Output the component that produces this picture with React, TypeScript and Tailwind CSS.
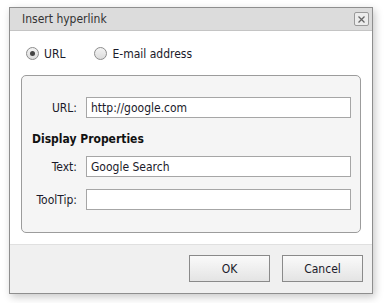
import React from "react";

const font = { fontFamily: '"DejaVu Sans Condensed", "DejaVu Sans", sans-serif' };

function Radio({ checked }: { checked?: boolean }) {
  return (
    <span className="w-[13px] h-[13px] rounded-full border border-[#8c8c8c] bg-gradient-to-b from-[#f4f4f4] to-[#dcdcdc] flex items-center justify-center">
      {checked && <span className="w-[5px] h-[5px] rounded-full bg-[#444]" />}
    </span>
  );
}

function Field({ label, value }: { label: string; value: string }) {
  return (
    <div className="flex items-center">
      <div className="w-[55px] text-right text-[12px] text-[#1a1a2a]">{label}</div>
      <div className="ml-[9px] w-[265px] h-[21px] border border-[#a6a6a6] bg-white flex items-center px-[4px] text-[12px] text-[#1a1a2a]">
        {value}
      </div>
    </div>
  );
}

function Button({ children }: { children: React.ReactNode }) {
  return (
    <div className="w-[81px] h-[27px] border border-[#8a8a8a] bg-gradient-to-b from-[#fafafa] to-[#e4e4e4] flex items-center justify-center text-[12px] text-[#1a1a2a]">
      {children}
    </div>
  );
}

export default function App() {
  return (
    <div className="w-[384px] h-[303px] bg-white pt-[7px] pl-[9px]" style={font}>
      <div className="w-[364px] h-[287px] border border-[#8e8e8e] bg-white flex flex-col shadow-[2px_3px_8px_rgba(0,0,0,0.22)]">
        <div className="h-[23px] bg-[#dcdcdc] border-b border-[#c4c4c4] flex items-center justify-between pl-[12px] pr-[3px]">
          <span className="text-[12px] text-[#333]">Insert hyperlink</span>
          <span className="w-[15px] h-[14px] border border-[#9a9a9a] rounded-[2px] bg-[#ececec] flex items-center justify-center">
            <svg width="7" height="7" viewBox="0 0 7 7">
              <path d="M0.5 0.5 L6.5 6.5 M6.5 0.5 L0.5 6.5" stroke="#666" strokeWidth="1.3" />
            </svg>
          </span>
        </div>
        <div className="flex-1 flex flex-col pl-[11px] pr-[11px]">
          <div className="flex items-center mt-[16px] h-[13px] pl-[5px]">
            <Radio checked />
            <span className="ml-[5px] text-[12px] text-[#1a1a2a]">URL</span>
            <span className="ml-[29px]"><Radio /></span>
            <span className="ml-[5px] text-[12px] text-[#1a1a2a]">E-mail address</span>
          </div>
          <div className="mt-[15px] w-[340px] h-[158px] border border-[#9c9c9c] rounded-[5px] bg-[#f5f5f5] pt-[21px]">
            <Field label="URL:" value="http://google.com" />
            <div className="mt-[12px] pl-[10px] text-[12px] font-bold text-[#111]">Display Properties</div>
            <div className="mt-[8px]">
              <Field label="Text:" value="Google Search" />
            </div>
            <div className="mt-[12px]">
              <Field label="ToolTip:" value="" />
            </div>
          </div>
        </div>
        <div className="h-[49px] border-t border-[#e0e0e0] bg-[#f0f0f0] flex justify-end items-start pt-[10px] pr-[9px] gap-[12px]">
          <Button>OK</Button>
          <Button>Cancel</Button>
        </div>
      </div>
    </div>
  );
}
